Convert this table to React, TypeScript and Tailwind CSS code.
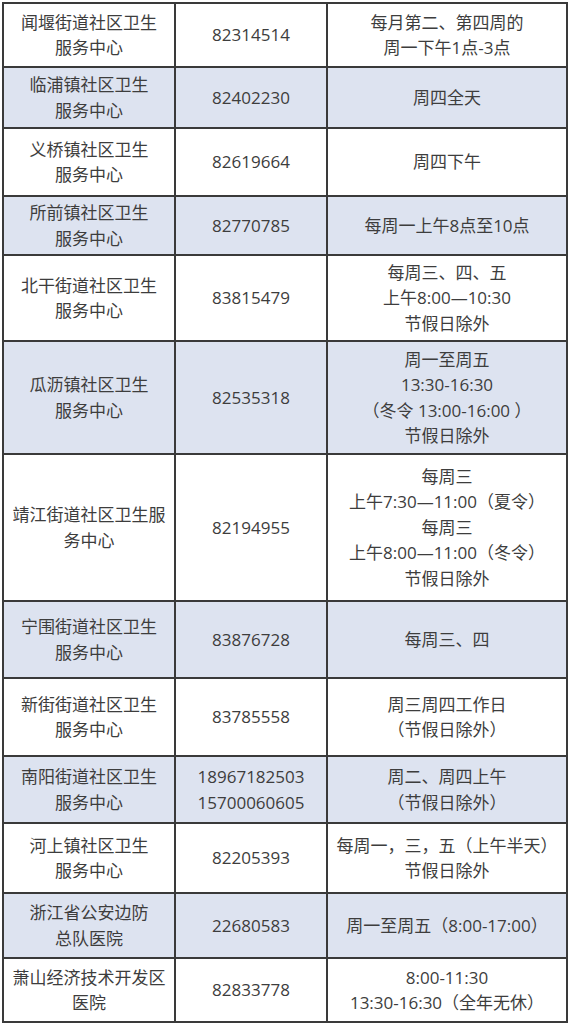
type Row = {
  name: string[]
  phone: string[]
  time: string[]
  h: number
  shaded?: boolean
}

const ROWS: Row[] = [
  { name: ['闻堰街道社区卫生', '服务中心'], phone: ['82314514'], time: ['每月第二、第四周的', '周一下午1点-3点'], h: 64 },
  { name: ['临浦镇社区卫生', '服务中心'], phone: ['82402230'], time: ['周四全天'], h: 61, shaded: true },
  { name: ['义桥镇社区卫生', '服务中心'], phone: ['82619664'], time: ['周四下午'], h: 68 },
  { name: ['所前镇社区卫生', '服务中心'], phone: ['82770785'], time: ['每周一上午8点至10点'], h: 59, shaded: true },
  { name: ['北干街道社区卫生', '服务中心'], phone: ['83815479'], time: ['每周三、四、五', '上午8:00—10:30', '节假日除外'], h: 86 },
  {
    name: ['瓜沥镇社区卫生', '服务中心'],
    phone: ['82535318'],
    time: ['周一至周五', '13:30-16:30', '（冬令 13:00-16:00 ）', '节假日除外'],
    h: 113,
    shaded: true,
  },
  {
    name: ['靖江街道社区卫生服', '务中心'],
    phone: ['82194955'],
    time: ['每周三', '上午7:30—11:00（夏令）', '每周三', '上午8:00—11:00（冬令）', '节假日除外'],
    h: 147,
  },
  { name: ['宁围街道社区卫生', '服务中心'], phone: ['83876728'], time: ['每周三、四'], h: 77, shaded: true },
  { name: ['新街街道社区卫生', '服务中心'], phone: ['83785558'], time: ['周三周四工作日', '（节假日除外）'], h: 78 },
  {
    name: ['南阳街道社区卫生', '服务中心'],
    phone: ['18967182503', '15700060605'],
    time: ['周二、周四上午', '（节假日除外）'],
    h: 67,
    shaded: true,
  },
  { name: ['河上镇社区卫生', '服务中心'], phone: ['82205393'], time: ['每周一，三，五（上午半天）', '节假日除外'], h: 70 },
  { name: ['浙江省公安边防', '总队医院'], phone: ['22680583'], time: ['周一至周五（8:00-17:00）'], h: 65, shaded: true },
  { name: ['萧山经济技术开发区', '医院'], phone: ['82833778'], time: ['8:00-11:30', '13:30-16:30（全年无休）'], h: 64 },
]

function Lines({ lines }: { lines: string[] }) {
  return (
    <>
      {lines.map((l, i) => (
        <div key={i} className="whitespace-pre">{l}</div>
      ))}
    </>
  )
}

export default function App() {
  return (
    <div className="w-[570px] h-[1024px] bg-white pt-[2px] pl-[2px] overflow-hidden">
      <table
        className="border-collapse table-fixed w-[564px] text-[17px] leading-[25.5px] text-[#3d3d3d] text-center"
        style={{ fontFamily: '"Open Sans", "Noto Sans CJK SC", sans-serif' }}
      >
        <colgroup>
          <col className="w-[172px]" />
          <col className="w-[152px]" />
          <col className="w-[240px]" />
        </colgroup>
        <tbody>
          {ROWS.map((r, i) => (
            <tr key={i} style={{ height: r.h }} className={r.shaded ? 'bg-[#dde3f0]' : 'bg-white'}>
              <td className="border-2 border-[#3a3a3a] px-1 align-middle">
                <Lines lines={r.name} />
              </td>
              <td className="border-2 border-[#3a3a3a] px-1 align-middle">
                <Lines lines={r.phone} />
              </td>
              <td className="border-2 border-[#3a3a3a] px-1 align-middle">
                <Lines lines={r.time} />
              </td>
            </tr>
          ))}
        </tbody>
      </table>
    </div>
  )
}
